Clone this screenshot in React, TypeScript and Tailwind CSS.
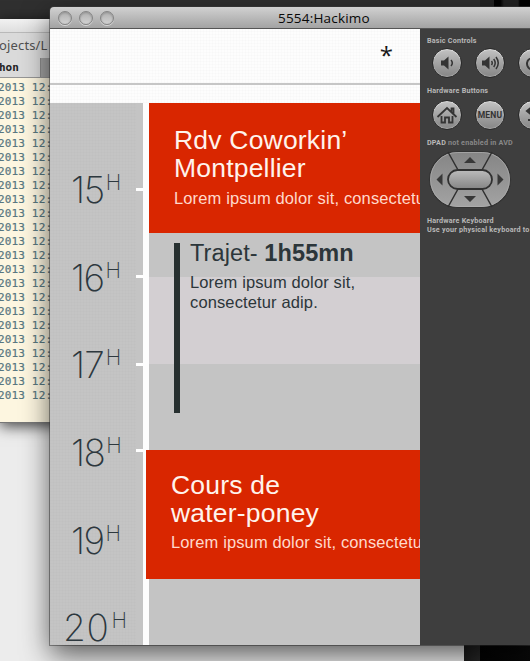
import React from "react";

const rows = Array.from({ length: 23 }, (_, i) => i);
const sans = "font-['Liberation_Sans',Arial,sans-serif]";
const grain =
  "bg-[repeating-linear-gradient(0deg,rgba(0,0,0,0.012)_0px,rgba(0,0,0,0.012)_1px,transparent_1px,transparent_3px),repeating-linear-gradient(90deg,rgba(0,0,0,0.012)_0px,rgba(0,0,0,0.012)_1px,transparent_1px,transparent_3px)]";

function Editor() {
  return (
    <div className="absolute left-0 top-[19px] flex h-[404px] w-[80px] flex-col overflow-hidden border-b border-[#777] bg-[#fdf6e0] shadow-[0_3px_14px_rgba(0,0,0,0.75)]">
      <div className="h-[14px] shrink-0 border-b border-[#b9b9b9] bg-linear-to-b from-[#f2f2f2] to-[#dedede]" />
      <div className="h-[25px] shrink-0 whitespace-nowrap bg-[#dadada] font-['Noto_Sans',sans-serif] text-[13px] leading-[25px] tracking-[0.15px] text-[#505050]">
        <span className="-ml-px">ojects/L</span>
      </div>
      <div className="flex h-[20px] shrink-0 border-b border-[#969696] bg-[#dadada]">
        <div className="w-[41px] border-r border-[#8c8c8c] font-['DejaVu_Sans_Mono',monospace] text-[11px] font-bold leading-[20px] text-[#222]">
          <span className="-ml-px">hon</span>
        </div>
        <div className="flex-1 bg-[#a4a4a4]" />
      </div>
      <div className="flex flex-col pt-[3px] font-['DejaVu_Sans_Mono',monospace] text-[11px] leading-[14px] tracking-[0.15px] text-[#587780] [-webkit-text-stroke:0.2px_#587780]">
        {rows.map((r) => (
          <div key={r} className="-ml-[2px] h-[14px] whitespace-nowrap">
            2013 12:
          </div>
        ))}
      </div>
    </div>
  );
}

function Hour({ n, gap, space }: { n: string; gap: string; space: string }) {
  return (
    <div className={`flex h-[87.7px] shrink-0 items-start whitespace-nowrap font-['Inter',sans-serif] font-extralight text-[#2d383e] ${gap}`}>
      <span className={`text-[37px] leading-[36px] ${space}`}>{n}</span>
      <span className="ml-[2px] text-[21px] leading-[22px]">H</span>
    </div>
  );
}

function Tick({ gap }: { gap: string }) {
  return <div className={`h-[3px] w-[7px] shrink-0 bg-white ${gap}`} />;
}

function Round({ children }: { children?: React.ReactNode }) {
  return (
    <div className="flex size-[30px] shrink-0 items-center justify-center rounded-full border border-[#292929] bg-linear-to-b from-[#c3c3c3] to-[#858585] text-[#343434] shadow-[inset_0_1px_1px_#dedede,inset_0_-1px_1px_#aaa]">
      {children}
    </div>
  );
}

function Volume({ loud }: { loud?: boolean }) {
  return (
    <svg width="22" height="16" viewBox="0 0 22 16" fill="none" stroke="currentColor" strokeWidth="1.5">
      {loud ? (
        <>
          <path d="M3 5.500h3l4.500-4v13l-4.500-4H3z" fill="currentColor" stroke="none" />
          <path d="M12.500 6q1.500 2 0 4M14.700 4q3 4 0 8M17 2q4.500 6 0 12" />
        </>
      ) : (
        <>
          <path d="M5 5.500h3l4.500-4v13l-4.500-4H5z" fill="currentColor" stroke="none" />
          <path d="M15 5q2.600 3 0 6" />
        </>
      )}
    </svg>
  );
}

function Controls() {
  return (
    <div className="flex h-[616px] w-[110px] shrink-0 flex-col overflow-hidden bg-[#3e3e3e] pl-[7px] font-['Roboto',sans-serif] text-[7.2px] font-bold leading-[9px] tracking-[0.2px] text-[#b8b8b8]">
      <div className="mt-[7px] h-[9px] whitespace-nowrap">Basic Controls</div>
      <div className="ml-[5px] mt-[3px] flex gap-[13px]">
        <Round><Volume /></Round>
        <Round><Volume loud /></Round>
        <Round>
          <svg width="16" height="16" viewBox="0 0 16 16" fill="none" stroke="currentColor" strokeWidth="2"><path d="M5 3.5a6 6 0 1 0 6 0M8 1v7" /></svg>
        </Round>
      </div>
      <div className="mt-[8px] h-[9px] whitespace-nowrap">Hardware Buttons</div>
      <div className="ml-[5px] mt-[5px] flex gap-[13px]">
        <Round>
          <svg className="shrink-0" width="22" height="20" viewBox="0 0 22 20" fill="none" stroke="currentColor" strokeWidth="1.8">
            <path d="M1.500 12 11 3l9.500 9M15.500 7V3.500h2V9M5.500 11v6.500h3.500v-5h4v5h3.500V11" />
          </svg>
        </Round>
        <Round><span className="text-[8.5px] tracking-[0.2px]">MENU</span></Round>
        <Round>
          <svg width="20" height="20" viewBox="0 0 20 20" fill="none" stroke="currentColor" strokeWidth="2"><path d="M9 2 4 6l5 4M4 6h8c6 0 6 9 0 9H5" /></svg>
        </Round>
      </div>
      <div className="mt-[8px] h-[9px] whitespace-nowrap text-[#888]">
        <span className="text-[#b8b8b8]">DPAD</span> not enabled in AVD
      </div>
      <svg className="mt-[1px] shrink-0" width="86" height="62" viewBox="0 0 86 62">
        <defs>
          <linearGradient id="pad" x1="0" y1="0" x2="0" y2="1"><stop stopColor="#858585" /><stop offset="1" stopColor="#a3a3a3" /></linearGradient>
          <linearGradient id="ok" x1="0" y1="0" x2="0" y2="1"><stop stopColor="#bcbcbc" /><stop offset="1" stopColor="#858585" /></linearGradient>
        </defs>
        <rect x="2.500" y="3.500" width="81" height="56" rx="28" fill="url(#pad)" stroke="#333" strokeWidth="1.200" />
        <rect x="3.500" y="4.500" width="79" height="54" rx="27" fill="none" stroke="#b0b0b0" strokeWidth="0.700" />
        <path d="m21 4 10 18M65 4 55 22M31 41 21 59M55 41l10 18" stroke="#303030" strokeWidth="1.500" />
        <rect x="21" y="22" width="44" height="19" rx="9.500" fill="url(#ok)" stroke="#303030" strokeWidth="1.800" />
        <path d="m43 9 6 6h-12zm0 45 6-6h-12zM9.500 31.500l6-6v12zm67 0-6-6v12z" fill="#383838" />
      </svg>
      <div className="mt-[6px] whitespace-nowrap">Hardware Keyboard<br />Use your physical keyboard to</div>
    </div>
  );
}

function Screen() {
  return (
    <div className={`flex h-[616px] w-[370px] shrink-0 flex-col overflow-hidden bg-[#fdfdfd] ${sans}`}>
      <div className={`flex h-[56px] shrink-0 justify-end border-b-2 border-[#c6c6c6] pr-[27px] ${grain}`}>
        <span className="mt-[8px] font-['Open_Sans',sans-serif] text-[24px] font-medium leading-[36px] text-[#171717]">*</span>
      </div>
      <div className={`h-[18px] shrink-0 ${grain}`} />
      <div className="flex h-[542px] shrink-0">
        <div className="flex w-[93px] shrink-0 overflow-hidden bg-[#c4c4c4]">
          <div className={`flex h-[542px] w-[86px] shrink-0 flex-col pt-[69px] ${grain}`}>
            <Hour n="15" gap="pl-[21px]" space="tracking-[-1.4px]" />
            <Hour n="16" gap="pl-[21px]" space="tracking-[-1.6px]" />
            <Hour n="17" gap="pl-[21px]" space="tracking-[-0.9px]" />
            <Hour n="18" gap="pl-[21px]" space="tracking-[-1.6px]" />
            <Hour n="19" gap="pl-[21px]" space="tracking-[-1.6px]" />
            <Hour n="20" gap="pl-[13px]" space="tracking-[0.6px]" />
          </div>
          <div className="flex flex-col">
            <Tick gap="mt-[85px]" />
            <Tick gap="mt-[84px]" />
            <Tick gap="mt-[85px]" />
            <Tick gap="mt-[83px]" />
          </div>
        </div>
        <div className="flex w-[277px] shrink-0 flex-col">
          <div className="ml-[6px] h-[130px] bg-[#d92600] pl-[25px] pt-[23px] text-[#fff3ec]">
            <div className="whitespace-nowrap text-[26.5px] leading-[28px] tracking-[0.2px]">Rdv Coworkin’<br />Montpellier</div>
            <div className="mt-[6px] whitespace-nowrap text-[16.5px] leading-[20px] tracking-[0.13px] text-[#ffd9cc]">Lorem ipsum dolor sit, consectetu</div>
          </div>
          <div className="ml-[6px] flex h-[217px] bg-[linear-gradient(to_bottom,#c4c4c4_0px,#c4c4c4_44px,#d3cfd2_44px,#d3cfd2_131px,#c4c4c4_131px)] pl-[25px] text-[#2c363a]">
            <div className="mt-[10px] h-[170px] w-[6px] shrink-0 bg-[#273030]" />
            <div className="ml-[10px] whitespace-nowrap pt-[6px]">
              <div className="text-[23.5px] leading-[28px] tracking-[0.1px]">Trajet- <b>1h55mn</b></div>
              <div className="mt-[5px] text-[16.5px] leading-[20px] tracking-[0.13px]">Lorem ipsum dolor sit,<br />consectetur adip.</div>
            </div>
          </div>
          <div className="ml-[3px] h-[129px] bg-[#d92600] pl-[25px] pt-[22px] text-[#fff3ec]">
            <div className="whitespace-nowrap text-[26.5px] leading-[27.5px] tracking-[0.2px]">Cours de<br />water-poney</div>
            <div className="mt-[5px] whitespace-nowrap text-[16.5px] leading-[20px] tracking-[0.13px] text-[#ffd9cc]">Lorem ipsum dolor sit, consectetu</div>
          </div>
          <div className="ml-[6px] flex-1 bg-[#c4c4c4]" />
        </div>
      </div>
    </div>
  );
}

export default function App() {
  return (
    <div className="relative h-[661px] w-[530px] overflow-hidden bg-[#303030]">
      <div className="absolute left-0 top-[40px] h-[621px] w-[464px] bg-[#ececec]" />
      <div className="absolute left-[480px] top-0 h-[8px] w-[50px] bg-[linear-gradient(90deg,#222_0px,#222_14px,#000_14px,#000_20px,#222_24px,#222_38px,#000_40px)]" />
      <div className="absolute left-[464px] top-[640px] h-[21px] w-[66px] bg-[linear-gradient(90deg,#1c1c1c_0px,#292929_16px,#030303_16px,#090909_66px)]" />
      <Editor />
      <div className="absolute left-[50px] top-[7px] flex h-[638px] w-[480px] flex-col rounded-tl-[4px] shadow-[0_10px_28px_rgba(0,0,0,0.62),0_0_0_1px_rgba(70,70,70,0.5)]">
        <div className="relative flex h-[22px] shrink-0 items-center gap-[7px] rounded-tl-[4px] border-b border-[#555] bg-linear-to-b from-[#d1d1d1] to-[#a3a3a3] pl-[8px]">
          {[0, 1, 2].map((i) => (
            <div key={i} className="size-[14px] rounded-full border border-[#858585] bg-linear-to-b from-[#b0b0b0] to-[#d2d2d2] shadow-[0_1px_0_#d6d6d6,inset_0_1px_2px_#929292]" />
          ))}
          <span className="ml-[157px] whitespace-nowrap font-['Open_Sans',sans-serif] text-[13.5px] leading-[20px] tracking-[0.2px] text-[#080808]">5554:Hackimo</span>
        </div>
        <div className="flex h-[616px] overflow-hidden">
          <Screen />
          <Controls />
        </div>
      </div>
    </div>
  );
}
